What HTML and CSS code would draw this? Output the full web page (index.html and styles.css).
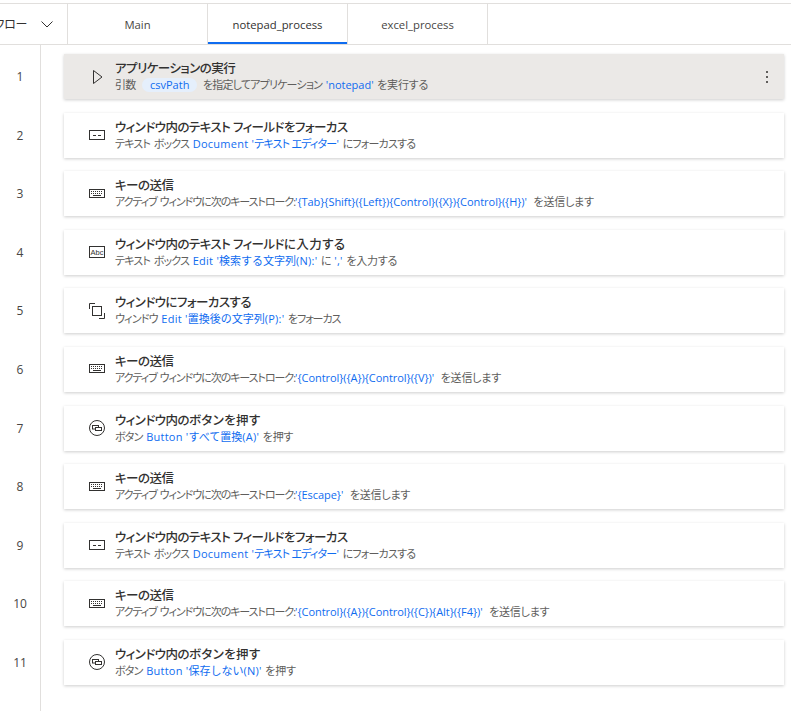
FILE: index.html
```html
<!DOCTYPE html>
<html lang="ja">
<head>
  <meta charset="UTF-8">
  <meta name="viewport" content="width=device-width, initial-scale=1.0">
  <title>notepad_process</title>
  <link rel="stylesheet" href="styles.css">
</head>
<body>
  <svg class="icon-defs" width="0" height="0">
    <symbol id="i-play" viewBox="0 0 18 18"><path d="M5.5 2.5v13L14 9z" fill="none" stroke="#323130"/></symbol>
    <symbol id="i-field" viewBox="0 0 18 18"><rect x="1.5" y="4.5" width="15" height="9" fill="none" stroke="#323130"/><path d="M5 9.5h3M10 9.5h3" stroke="#323130" fill="none"/></symbol>
    <symbol id="i-keys" viewBox="0 0 18 18"><rect x="1.5" y="4.5" width="15" height="8" fill="none" stroke="#323130"/><path d="M3 6.5h12M3 8.5h12" stroke="#323130" stroke-dasharray="1 1" fill="none"/><path d="M5 10.5h8" stroke="#323130" fill="none"/></symbol>
    <symbol id="i-win" viewBox="0 0 18 18"><rect x="4.5" y="4.5" width="9" height="9" fill="none" stroke="#323130"/><path d="M1.5 7V1.5H7M16.5 11v5.5H11" fill="none" stroke="#323130"/></symbol>
    <symbol id="i-btn" viewBox="0 0 18 18"><circle cx="9" cy="9" r="7.5" fill="none" stroke="#323130"/><rect x="4.5" y="6.5" width="6" height="3.5" fill="none" stroke="#323130"/><rect x="7.5" y="8.5" width="6" height="3" fill="#fff" stroke="#323130"/></symbol>
  </svg>

  <!-- tabs -->
  <div class="tabbar">
    <div class="subflows">
      <span class="subflows-label">サブフロー</span>
      <svg class="chevron" width="12" height="7" viewBox="0 0 12 7"><path d="M.5.5l5.500 5.500L11.500.5" fill="none" stroke="#323130"/></svg>
    </div>
    <div class="tab">Main</div>
    <div class="tab active">notepad_process</div>
    <div class="tab">excel_process</div>
  </div>

  <div class="flow">
    <div class="row selected">
      <div class="num">1</div>
      <div class="card">
        <svg class="icon"><use href="#i-play"/></svg>
        <div class="body">
          <div class="title">アプリケーションの実行</div>
          <div class="desc">引数 <span class="chip">csvPath</span> を指定してアプリケーション <span class="val plain">'notepad'</span> <span class="wide">を実行する</span></div>
        </div>
        <div class="more"><i></i><i></i><i></i></div>
      </div>
    </div>
    <div class="row">
      <div class="num">2</div>
      <div class="card">
        <svg class="icon"><use href="#i-field"/></svg>
        <div class="body">
          <div class="title">ウィンドウ内のテキスト フィールドをフォーカス</div>
          <div class="desc">テキスト ボックス <span class="val">Document '<span class="kana">テキスト エディター</span>'</span> にフォーカスする</div>
        </div>
      </div>
    </div>
    <div class="row">
      <div class="num">3</div>
      <div class="card">
        <svg class="icon"><use href="#i-keys"/></svg>
        <div class="body">
          <div class="title">キーの送信</div>
          <div class="desc"><span class="tight">アクティブ ウィンドウに次のキーストローク:</span><span class="val keys">'{Tab}{Shift}({Left}){Control}({X}){Control}({H})'</span> <span class="wide">を送信します</span></div>
        </div>
      </div>
    </div>
    <div class="row">
      <div class="num">4</div>
      <div class="card">
        <svg class="icon" viewBox="0 0 18 18"><rect x="1.500" y="3.500" width="15" height="11" fill="none" stroke="#323130"/><text x="9" y="12" font-size="7.500" text-anchor="middle" fill="#323130" font-family="Liberation Sans">Abc</text></svg>
        <div class="body">
          <div class="title">ウィンドウ内のテキスト フィールド<span class="wide">に入力する</span></div>
          <div class="desc">テキスト ボックス <span class="val">Edit '<span class="full">検索する文字列</span>(N):'</span> に <span class="val">','</span> <span class="wide">を入力する</span></div>
        </div>
      </div>
    </div>
    <div class="row">
      <div class="num">5</div>
      <div class="card">
        <svg class="icon"><use href="#i-win"/></svg>
        <div class="body">
          <div class="title">ウィンドウにフォーカスする</div>
          <div class="desc">ウィンドウ <span class="val">Edit '<span class="full">置換後の文字列</span>(P):'</span> <span class="tight">をフォーカス</span></div>
        </div>
      </div>
    </div>
    <div class="row">
      <div class="num">6</div>
      <div class="card">
        <svg class="icon"><use href="#i-keys"/></svg>
        <div class="body">
          <div class="title">キーの送信</div>
          <div class="desc"><span class="tight">アクティブ ウィンドウに次のキーストローク:</span><span class="val keys">'{Control}({A}){Control}({V})'</span> <span class="wide">を送信します</span></div>
        </div>
      </div>
    </div>
    <div class="row">
      <div class="num">7</div>
      <div class="card">
        <svg class="icon"><use href="#i-btn"/></svg>
        <div class="body">
          <div class="title">ウィンドウ内の<span class="wide">ボタンを押す</span></div>
          <div class="desc">ボタン <span class="val">Button '<span class="full">すべて置換</span>(A)'</span> <span class="wide">を押す</span></div>
        </div>
      </div>
    </div>
    <div class="row">
      <div class="num">8</div>
      <div class="card">
        <svg class="icon"><use href="#i-keys"/></svg>
        <div class="body">
          <div class="title">キーの送信</div>
          <div class="desc"><span class="tight">アクティブ ウィンドウに次のキーストローク:</span><span class="val keys">'{Escape}'</span> <span class="wide">を送信します</span></div>
        </div>
      </div>
    </div>
    <div class="row">
      <div class="num">9</div>
      <div class="card">
        <svg class="icon"><use href="#i-field"/></svg>
        <div class="body">
          <div class="title">ウィンドウ内のテキスト フィールドをフォーカス</div>
          <div class="desc">テキスト ボックス <span class="val">Document '<span class="kana">テキスト エディター</span>'</span> にフォーカスする</div>
        </div>
      </div>
    </div>
    <div class="row">
      <div class="num">10</div>
      <div class="card">
        <svg class="icon"><use href="#i-keys"/></svg>
        <div class="body">
          <div class="title">キーの送信</div>
          <div class="desc"><span class="tight">アクティブ ウィンドウに次のキーストローク:</span><span class="val keys">'{Control}({A}){Control}({C}){Alt}({F4})'</span> <span class="wide">を送信します</span></div>
        </div>
      </div>
    </div>
    <div class="row">
      <div class="num">11</div>
      <div class="card">
        <svg class="icon"><use href="#i-btn"/></svg>
        <div class="body">
          <div class="title">ウィンドウ内の<span class="wide">ボタンを押す</span></div>
          <div class="desc">ボタン <span class="val">Button '<span class="full">保存しない</span>(N)'</span> <span class="wide">を押す</span></div>
        </div>
      </div>
    </div>
  </div>
</body>
</html>
```

FILE: styles.css
```css
html, body {
  height: 100%;
}
body {
  margin: 0;
  background: #fff;
  color: #323130;
  font-family: "Open Sans", "Noto Sans CJK JP", sans-serif;
  font-feature-settings: "palt";
  overflow: hidden;
  display: flex;
  flex-direction: column;
}
.icon-defs {
  position: absolute;
}

.tabbar {
  flex: none;
  display: flex;
  height: 40px;
  margin-top: 3px;
  border-top: 1px solid #e1dfdd;
  border-bottom: 1px solid #e1dfdd;
}
.subflows {
  width: 68px;
  flex: none;
  display: flex;
  align-items: center;
  justify-content: flex-end;
  gap: 14px;
  padding-right: 14px;
  box-sizing: border-box;
  border-right: 1px solid #e1dfdd;
  overflow: hidden;
  font-size: 12px;
  letter-spacing: -0.3px;
  white-space: nowrap;
}
.subflows-label {
  flex: none;
}
.chevron {
  flex: none;
}
.tab {
  width: 139px;
  flex: none;
  display: flex;
  align-items: center;
  justify-content: center;
  border-right: 1px solid #e1dfdd;
  font-size: 11.3px;
  color: #484644;
}
.tab.active {
  color: #323130;
  box-shadow: inset 0 -2px 0 #0f6cf0;
}

.flow {
  flex: 1;
  padding-top: 9px;
  background: linear-gradient(#e1dfdd, #e1dfdd) 40px 0 / 1px 100% no-repeat;
}
.row {
  display: flex;
  height: 58.6px;
}
.num {
  width: 40px;
  flex: none;
  height: 45px;
  display: flex;
  align-items: center;
  justify-content: center;
  font-size: 12px;
  color: #484644;
}
.card {
  margin-left: 24px;
  width: 720px;
  height: 45px;
  flex: none;
  display: flex;
  align-items: center;
  background: #fff;
  box-shadow: 0 1px 3px rgba(0, 0, 0, 0.2);
}
.selected .card {
  background: #ebe9e7;
}
.icon {
  width: 18px;
  height: 18px;
  flex: none;
  margin-left: 24px;
  margin-right: 9px;
}
.body {
  flex: 1;
  min-width: 0;
}
.title {
  font-size: 12.5px;
  font-weight: 500;
  line-height: 17px;
  letter-spacing: -0.55px;
  white-space: nowrap;
}
.desc {
  font-size: 11px;
  line-height: 16px;
  letter-spacing: -0.8px;
  word-spacing: 1.5px;
  color: #605e5c;
  white-space: nowrap;
}
.val {
  color: #0f6cf0;
  letter-spacing: 0.25px;
  word-spacing: 0;
}
.val.plain {
  letter-spacing: 0;
}
.val .kana {
  letter-spacing: -0.8px;
}
/* the reference's kanji runs take their full em, kana are squeezed */
.val .full {
  font-feature-settings: normal;
  letter-spacing: 0;
}
.val.keys {
  letter-spacing: -0.05px;
  padding-right: 3px;
}
.desc .tight {
  letter-spacing: -1.05px;
  word-spacing: 1px;
}
.desc .wide {
  letter-spacing: -0.2px;
}
.title .wide {
  letter-spacing: 0.4px;
}
.chip {
  display: inline-block;
  padding: 0 8px;
  margin: 0 2px 0 3px;
  border-radius: 8px;
  background: #e5effc;
  color: #0f6cf0;
  letter-spacing: 0;
  line-height: 14px;
}
.more {
  display: flex;
  flex-direction: column;
  gap: 3px;
  margin-right: 16px;
}
.more i {
  display: block;
  width: 2px;
  height: 2px;
  background: #605e5c;
}
```
